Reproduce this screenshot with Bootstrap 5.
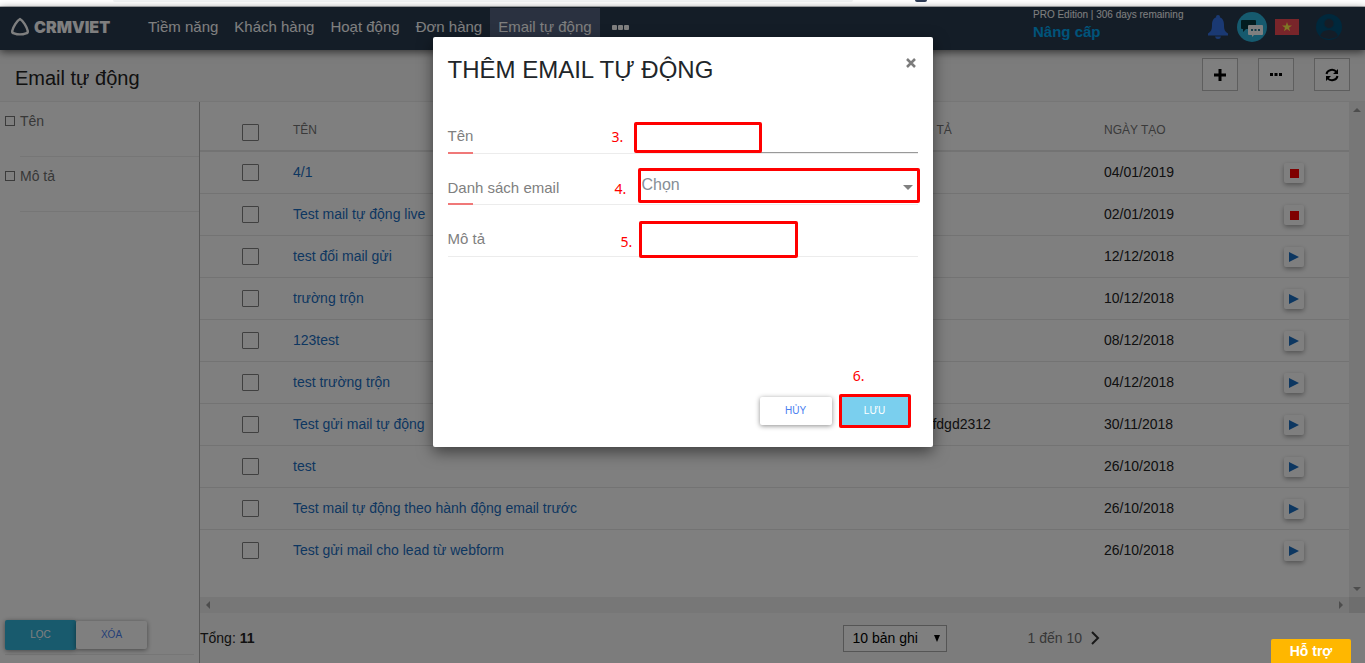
<!DOCTYPE html>
<html lang="vi">
<head>
<meta charset="utf-8">
<meta name="viewport" content="width=device-width, initial-scale=1">
<title>Email tự động</title>
<link href="https://cdn.jsdelivr.net/npm/bootstrap@5.3.0/dist/css/bootstrap.min.css" rel="stylesheet">
<style>
  body { font-family: "Liberation Sans", Arial, sans-serif; font-size: 14px; line-height: 20px; color: #222; height: 100vh; overflow: hidden; }
  a { text-decoration: none; }
  .tab-strip { height: 7px; background: #fff; border-bottom: 1px solid #b4b6b8; }
  .address-pill { height: 2px; width: 740px; margin-left: 113px; background: #f1f3f4; border-radius: 0 0 8px 8px; }
  .profile-dot { width: 12px; height: 2px; margin-left: 62px; background: #2d3b55; border-radius: 0 0 2px 2px; }
  .app { min-height: 0; background: #fff; }
  .top-bar { height: 43px; background: #283a4f; box-shadow: 0 2px 8px rgba(0,0,0,.6); z-index: 2; padding: 0 22px 0 10px; }
  .brand { width: 130px; color: #fff; font: 900 16px/20px Inter, sans-serif; }
  .top-link { color: #fff; font-size: 15px; line-height: 38px; padding: 0 8px; margin-top: 1px; height: 42px; white-space: nowrap; }
  .top-link.current { background: #546280; }
  .edition { color: #fff; font-size: 10px; line-height: 14px; width: 174px; padding-top: 1px; }
  .edition a { color: #00a8f3; font-size: 15px; line-height: 20px; font-weight: bold; }
  .title-bar { height: 52px; background: #f8f8f8; border-bottom: 1px solid #ececec; padding: 0 15px; }
  .title-bar h1 { font-size: 20px; line-height: 24px; margin: 0; }
  .tools { gap: 20px; margin-bottom: 2px; }
  .tool { height: 33px; background: #fff; border: 1px solid #bdbdbd; padding: 0; width: 36px; display: grid; place-items: center; }
  .filters { width: 200px; border-right: 1px solid #b5b5b5; }
  .filter { padding: 9px 0 0 5px; height: 55px; color: #707070; }
  .filter label { display: flex; align-items: center; gap: 5px; }
  .filter-rule { height: 1px; margin: 25px 0 0 15px; background: #ececec; }
  .box { appearance: none; border: 1px solid #777; margin: 0; background: #fff; display: block; }
  .box-sm { width: 10px; height: 10px; }
  .box-lg { width: 17px; height: 17px; border-radius: 1px; border-color: #808080; }
  .flat { border: 0; border-radius: 2px; height: 28px; width: 71px; font-size: 10px; line-height: 28px; padding: 0; text-align: center; background: #fff; color: #4a80f0; box-shadow: 0 1px 5px rgba(0,0,0,.45); }
  .flat-blue { background: #31b4da; color: #fff; height: 30px; }
  .filter-foot { margin: 0 5px 8px; padding-bottom: 4px; border-bottom: 1px solid #ececec; }
  .list { table-layout: fixed; width: 100%; border-collapse: collapse; }
  .list th { height: 49px; padding: 8px 0 0; border-bottom: 2px solid #e6e6e6; font-size: 12px; font-weight: normal; color: #757575; vertical-align: middle; }
  .list td { height: 42px; padding: 0; border-bottom: 1px solid #e6e6e6; vertical-align: middle; white-space: nowrap; }
  .list tbody tr:last-child td { border-bottom: 0; }
  .list a { color: #1b6ec2; }
  .list .box-lg { margin-left: 42px; }
  .run { width: 20px; height: 20px; border: 0; border-radius: 2px; background: #fff; padding: 0; display: grid; place-items: center; box-shadow: 0 2px 5px rgba(0,0,0,.35); margin: 2px 0 0 1px; }
  .bar-y, .bar-x { background: #eee; color: #9a9a9a; }
  .bar-y { width: 16px; padding: 5px 4px; }
  .bar-x { height: 16px; padding: 4px 5px; }
  .corner { width: 16px; height: 16px; background: #dcdcdc; }
  .bottom-bar { height: 50px; background: #f8f8f8; padding-right: 265px; }
  .count { height: 27px; width: 104px; border: 1px solid #aaa; background: #fff; font-size: 14px; padding: 0 5px 0 9px; appearance: none; color: #000; }
  .count-arrow { right: 6px; top: 10px; }
  .range { margin-left: 81px; color: #707070; }
  .shade { inset: 0; background: rgba(0,0,0,.5); z-index: 5; }
  .help { right: 14px; bottom: 0; z-index: 1060; background: #ffb700; color: #fff; font-weight: bold; font-size: 14px; line-height: 24px; width: 80px; height: 24px; padding: 0; border: 0; border-radius: 2px 2px 0 0; }
  .modal-dialog { margin-top: 30px; }
  .modal-content { border: 0; border-radius: 2px; min-height: 410px; box-shadow: 0 5px 15px rgba(0,0,0,.5); padding: 0 15px; }
  .modal-content h2 { font-size: 24px; line-height: 28px; margin: 19px 0 0; color: #212529; font-weight: normal; }
  .close-x { border: 0; background: none; padding: 0; margin: 20px 0 0; height: 12px; width: 14px; display: grid; place-items: center; }
  .fields { margin-top: 37px; }
  .field { height: 52px; border-bottom: 1px solid #ececec; padding-bottom: 6px; }
  .field.needed { height: 51px; padding-bottom: 5px; }
  .field.needed:first-child { height: 33px; padding-bottom: 6px; }
  .field label { width: 190px; font-size: 15px; line-height: 22px; color: #808080; }
  .needed::after { content: ""; position: absolute; left: 0; bottom: -1px; width: 25px; height: 2px; background: #f07878; }
  .field input, .field select { border: 0; background: transparent; width: 100%; outline: 0; padding: 0; font-size: 16px; appearance: none; color: #868e96; height: 24px; }
  .field select { margin-bottom: 2px; }
  .name-slot { border-bottom: 1px solid #999; margin-bottom: -6px; }
  .step { position: absolute; color: #f00; font: 14px/18px "Noto Sans", sans-serif; }
  .frame { position: absolute; border: 3px solid #f00; border-radius: 2px; pointer-events: none; }
  .dialog-foot { gap: 7px; margin-bottom: 22px; padding-right: 7px; }
  .modal .flat { width: 72px; }
  .modal .save { background: #7acfee; color: #fff; box-shadow: none; }
</style>
</head>
<body class="d-flex flex-column">
<div class="tab-strip d-flex flex-shrink-0"><div class="address-pill"></div><div class="profile-dot"></div></div>
<div class="app position-relative d-flex flex-column flex-grow-1">
  <header class="top-bar position-relative d-flex flex-shrink-0">
    <a href="#" class="brand d-flex align-items-center gap-1 pb-1">
      <svg width="20" height="20" viewBox="0 0 20 20" fill="none" stroke="#fff" stroke-width="2.4" stroke-linejoin="round"><path d="M10 2C7 3.500 3 10 2.200 14Q2 16 4 16.300Q10 18.500 16 16.300Q18 16 17.800 14C17 10 13 3.500 10 2Z"/></svg>
      <span>CRMVIET</span>
    </a>
    <nav class="d-flex flex-grow-1">
      <a href="#" class="top-link">Tiềm năng</a><a href="#" class="top-link">Khách hàng</a><a href="#" class="top-link">Hoạt động</a><a href="#" class="top-link">Đơn hàng</a><a href="#" class="top-link current">Email tự động</a>
      <a href="#" class="top-link" aria-label="Thêm"><svg class="ms-1" width="19" height="6" fill="#fff"><rect width="5" height="5" rx="1"/><rect x="6" width="5" height="5" rx="1"/><rect x="12" width="5" height="5" rx="1"/></svg></a>
    </nav>
    <div class="edition"><div>PRO Edition | 306 days remaining</div><a href="#" class="d-block">Nâng cấp</a></div>
    <div class="d-flex align-items-center pb-1">
      <svg width="22" height="26" viewBox="0 0 22 26" fill="#3473e6"><circle cx="11" cy="3" r="2"/><path d="M11 3C6.500 3 5 7 5 11C5 16 4 17.500 1 19.500V21.500H21V19.500C18 17.500 17 16 17 11C17 7 15.500 3 11 3ZM8 22.500H14Q13.500 25 11 25T8 22.500Z"/></svg>
      <svg class="ms-2" width="30" height="30" viewBox="0 0 30 30"><circle cx="15" cy="15" r="15" fill="#2cb4dc"/><path d="M5 8h13q1 0 1 1v7q0 1-1 1H9l-3 3v-3H5q-1 0-1-1V9q0-1 1-1Z" fill="#06383e"/><path d="M12 13h13q1 0 1 1v8q0 1-1 1h-8l-2 2v-2h-3q-1 0-1-1v-8q0-1 1-1Z" fill="#fff"/><path d="M14 17h2v2h-2zM17.500 17h2v2h-2zM21 17h2v2h-2z" fill="#2c7c94"/></svg>
      <svg class="ms-2" width="24" height="16" viewBox="0 0 24 16"><path fill="#f04a54" d="M0 0h24v16H0z"/><path fill="#fff04a" d="M12 3l1.200 3.500H17l-3 2.200 1.100 3.600-3.100-2.200-3.100 2.200L10 8.700 7 6.500h3.800Z"/></svg>
      <svg class="ms-3" width="28" height="28" viewBox="1 0 28 28"><circle cx="15" cy="14" r="13" fill="#005078"/><circle cx="15" cy="10.500" r="5" fill="#283a4f" stroke="#064c70"/><path d="M6 23Q8 17 15 17T24 23Q20 26 15 26T6 23Z" fill="#283a4f"/></svg>
    </div>
  </header>
  <div class="title-bar d-flex align-items-center flex-shrink-0">
    <h1 class="fw-normal me-auto mt-1">Email tự động</h1>
    <div class="tools d-flex">
      <button class="tool" aria-label="Thêm mới"><svg width="12" height="12"><path d="M6 0v12M0 6h12" stroke="#000" stroke-width="3"/></svg></button>
      <button class="tool" aria-label="Khác"><svg width="12" height="4"><path d="M0 0h3v3H0zM4.500 0h3v3h-3zM9 0h3v3H9z"/></svg></button>
      <button class="tool" aria-label="Tải lại"><svg width="14" height="14" viewBox="0 0 14 14" fill="none" stroke="#000" stroke-width="2"><path d="M1.500 6A5.500 5 0 0 1 11.500 4M12.500 8A5.500 5 0 0 1 2.500 10"/><path d="M13 1v5H8ZM1 13V8h5Z" fill="#000" stroke="none"/></svg></button>
    </div>
  </div>
  <div class="d-flex flex-grow-1" style="min-height:0">
    <aside class="filters d-flex flex-column flex-shrink-0">
      <div class="filter"><label><input type="checkbox" class="box box-sm">Tên</label><div class="filter-rule"></div></div>
      <div class="filter"><label><input type="checkbox" class="box box-sm">Mô tả</label><div class="filter-rule"></div></div>
      <div class="filter-foot d-flex align-items-center mt-auto"><button class="flat flat-blue">LỌC</button><button class="flat">XÓA</button></div>
    </aside>
    <main class="d-flex flex-column flex-grow-1">
      <div class="d-flex flex-grow-1">
        <div class="flex-grow-1">
          <table class="list">
            <colgroup><col style="width:93px"><col><col style="width:190px"><col style="width:179px"><col style="width:66px"></colgroup>
            <thead><tr><th><input type="checkbox" class="box box-lg mt-1" aria-label="Chọn tất cả"></th><th>TÊN</th><th>MÔ TẢ</th><th>NGÀY TẠO</th><th></th></tr></thead>
            <tbody id="rows"></tbody>
          </table>
        </div>
        <div class="bar-y d-flex flex-column justify-content-between"><svg width="8" height="5" fill="currentColor"><path d="M0 5L4 1L8 5Z"/></svg><svg width="8" height="5" fill="currentColor"><path d="M0 0L4 4L8 0Z"/></svg></div>
      </div>
      <div class="d-flex"><div class="bar-x d-flex flex-grow-1 justify-content-between"><svg width="5" height="8" fill="currentColor"><path d="M5 0L1 4L5 8Z"/></svg><svg width="5" height="8" fill="currentColor"><path d="M0 0L4 4L0 8Z"/></svg></div><div class="corner"></div></div>
      <div class="bottom-bar d-flex align-items-center">
        <div class="me-auto">Tổng: <b>11</b></div>
        <div class="position-relative"><select class="count" aria-label="Số bản ghi"><option>10 bản ghi</option></select><svg class="count-arrow position-absolute" width="8" height="7"><path d="M1 0h6L4 7Z"/></svg></div>
        <div class="range d-flex align-items-center gap-2">1 đến 10 <svg width="10" height="14" fill="none" stroke="#333" stroke-width="2"><path d="M2 1l6 6-6 6"/></svg></div>
      </div>
    </main>
  </div>
  <div class="shade position-absolute"></div>
  <div class="modal d-block position-absolute" role="dialog" aria-labelledby="dialog-title">
    <div class="modal-dialog"><form class="modal-content">
      <div class="d-flex justify-content-between"><h2 id="dialog-title">THÊM EMAIL TỰ ĐỘNG</h2><button type="button" class="close-x" aria-label="Đóng"><svg width="10" height="10"><path d="M1 1l8 8M9 1l-8 8" stroke="#7c7c7c" stroke-width="2.500"/></svg></button></div>
      <div class="fields">
        <div class="field needed position-relative d-flex align-items-end"><label for="f-name">Tên</label><div class="name-slot flex-grow-1"><input id="f-name"></div><span class="step" style="left:164px;top:7px">3.</span><span class="frame" style="left:186px;top:1px;width:128px;height:31px"></span></div>
        <div class="field needed position-relative d-flex align-items-end"><label for="f-list">Danh sách email</label><div class="flex-grow-1 ps-1"><select id="f-list"><option>Chọn</option></select></div><svg class="position-absolute" style="right:5px;top:31px" width="10" height="5" fill="#808080"><path d="M0 0h10L5 5Z"/></svg><span class="step" style="left:167px;top:26px">4.</span><span class="frame" style="left:190px;top:14px;width:282px;height:35px"></span></div>
        <div class="field position-relative d-flex align-items-end"><label for="f-note">Mô tả</label><div class="flex-grow-1"><input id="f-note"></div><span class="step" style="left:173px;top:28px">5.</span><span class="frame" style="left:191px;top:16px;width:159px;height:37px"></span></div>
      </div>
      <div class="dialog-foot d-flex justify-content-end mt-auto position-relative"><button type="button" class="flat">HỦY</button><button class="flat save">LƯU</button><span class="step" style="right:53px;top:-30px">6.</span><span class="frame" style="right:7px;top:-3px;width:72px;height:34px"></span></div>
    </form></div>
  </div>
</div>
<button class="help position-fixed">Hỗ trợ</button>
<script>
  const stop = '<svg width="10" height="10"><path d="M1 1h9v9H1z" fill="#f00"/></svg>';
  const play = '<svg width="10" height="10"><path d="M0 0v10l10-5z" fill="#1b6ec2"/></svg>';
  const mails = [
    ['4/1', '', '04/01/2019', 1], ['Test mail tự động live', '', '02/01/2019', 1], ['test đổi mail gửi', '', '12/12/2018'],
    ['trường trộn', '', '10/12/2018'], ['123test', '', '08/12/2018'], ['test trường trộn', '', '04/12/2018'],
    ['Test gửi mail tự động', 'sdffdgd2312', '30/11/2018'], ['test', '', '26/10/2018'],
    ['Test mail tự động theo hành động email trước', '', '26/10/2018'], ['Test gửi mail cho lead từ webform', '', '26/10/2018']
  ];
  document.getElementById('rows').innerHTML = mails.map(([name, note, date, live]) =>
    `<tr><td><input type="checkbox" class="box box-lg" aria-label="${name}"></td><td><a href="#">${name}</a></td><td>${note}</td><td>${date}</td><td><button class="run" aria-label="${live ? 'Dừng' : 'Chạy'}">${live ? stop : play}</button></td></tr>`).join('');
</script>
<script src="https://cdn.jsdelivr.net/npm/bootstrap@5.3.0/dist/js/bootstrap.bundle.min.js"></script>
</body>
</html>
